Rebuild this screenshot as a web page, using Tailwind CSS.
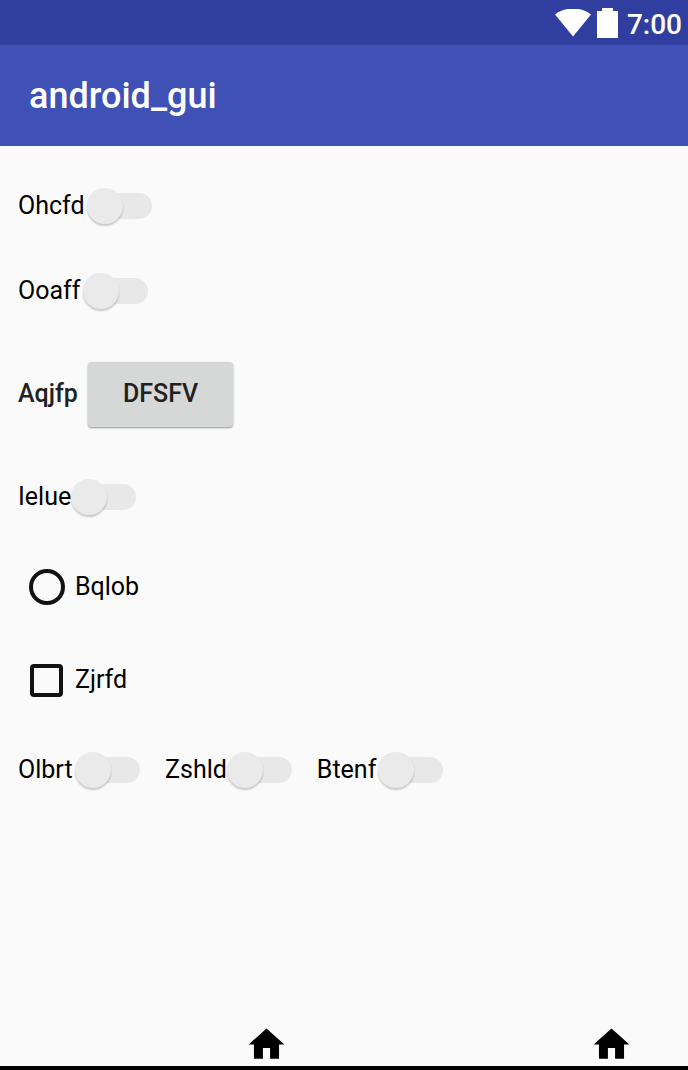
<!DOCTYPE html>
<html lang="en">
<head>
<meta charset="utf-8">
<meta name="viewport" content="width=device-width, initial-scale=1">
<title>android_gui</title>
<script src="https://cdn.jsdelivr.net/npm/@tailwindcss/browser@4"></script>
</head>
<body class="flex min-h-screen flex-col bg-[#fafafa] font-[Roboto,sans-serif] text-[25px] leading-8 text-black">
  <div class="flex h-[45px] items-center justify-end bg-[#303f9f] pr-[6px] text-white">
    <svg class="mr-[6px] h-7 w-9" viewBox="0 0 36 28" fill="currentColor" aria-hidden="true"><path d="M0 5.5C10-2.5 26-2.5 36 5.5L18 27.5Z"/></svg>
    <svg class="mr-[9px] h-[30px] w-[21px]" viewBox="0 0 21 30" fill="currentColor" aria-hidden="true"><path d="M5 0h11v3h5v27H0V3h5Z"/></svg>
    <span class="pt-1 text-[28px] font-medium leading-8">7:00</span>
  </div>
  <header class="flex h-[101px] items-center bg-[#3f51b5] px-[29px] text-white">
    <h1 class="text-[36px] font-medium leading-10">android_gui</h1>
  </header>
  <main class="flex grow flex-col px-[18px] pt-[18px]">
    <div class="flex h-[84px] items-center">
      <label for="s1" class="min-w-[69px]">Ohcfd</label>
      <input id="s1" type="checkbox" role="switch" class="relative h-9 w-[65px] shrink-0 appearance-none before:absolute before:inset-y-[5px] before:right-0 before:left-2 before:rounded-full before:bg-[#e8e8e8] after:absolute after:top-0 after:left-0 after:size-9 after:rounded-full after:bg-[#eaeaea] after:shadow-[0_2px_2px_rgba(0,0,0,0.2)] checked:after:left-[29px]">
    </div>
    <div class="flex h-[86px] items-center">
      <label for="s2" class="min-w-[65px]">Ooaff</label>
      <input id="s2" type="checkbox" role="switch" class="relative h-9 w-[65px] shrink-0 appearance-none before:absolute before:inset-y-[5px] before:right-0 before:left-2 before:rounded-full before:bg-[#e8e8e8] after:absolute after:top-0 after:left-0 after:size-9 after:rounded-full after:bg-[#eaeaea] after:shadow-[0_2px_2px_rgba(0,0,0,0.2)] checked:after:left-[29px]">
    </div>
    <div class="flex h-[120px] items-center font-medium text-[#212121]">
      <span class="min-w-[70px]">Aqjfp</span>
      <button type="button" class="h-[65px] w-[145px] rounded-[4px] bg-[#d6d7d7] shadow-[0_1px_2px_rgba(0,0,0,0.4)]">DFSFV</button>
    </div>
    <div class="flex h-[86px] items-center">
      <label for="s3" class="min-w-[53px]">Ielue</label>
      <input id="s3" type="checkbox" role="switch" class="relative h-9 w-[65px] shrink-0 appearance-none before:absolute before:inset-y-[5px] before:right-0 before:left-2 before:rounded-full before:bg-[#e8e8e8] after:absolute after:top-0 after:left-0 after:size-9 after:rounded-full after:bg-[#eaeaea] after:shadow-[0_2px_2px_rgba(0,0,0,0.2)] checked:after:left-[29px]">
    </div>
    <div class="flex h-[94px] items-center gap-[10px] pl-[11px]">
      <input id="r1" type="radio" class="size-9 shrink-0 appearance-none rounded-full border-4 border-[#111111] checked:bg-[#111111] checked:bg-clip-content checked:p-1">
      <label for="r1">Bqlob</label>
    </div>
    <div class="flex h-[92px] items-center gap-3 pl-3">
      <input id="c1" type="checkbox" class="size-[33px] shrink-0 appearance-none rounded-[4px] border-4 border-[#111111] checked:bg-[#111111]">
      <label for="c1">Zjrfd</label>
    </div>
    <div class="flex h-[88px] items-center gap-[25px]">
      <div class="flex items-center">
        <label for="s4" class="min-w-[57px]">Olbrt</label>
        <input id="s4" type="checkbox" role="switch" class="relative h-9 w-[65px] shrink-0 appearance-none before:absolute before:inset-y-[5px] before:right-0 before:left-2 before:rounded-full before:bg-[#e8e8e8] after:absolute after:top-0 after:left-0 after:size-9 after:rounded-full after:bg-[#eaeaea] after:shadow-[0_2px_2px_rgba(0,0,0,0.2)] checked:after:left-[29px]">
      </div>
      <div class="flex items-center">
        <label for="s5" class="min-w-[61px]">Zshld</label>
        <input id="s5" type="checkbox" role="switch" class="relative h-9 w-[65px] shrink-0 appearance-none before:absolute before:inset-y-[5px] before:right-0 before:left-2 before:rounded-full before:bg-[#e8e8e8] after:absolute after:top-0 after:left-0 after:size-9 after:rounded-full after:bg-[#eaeaea] after:shadow-[0_2px_2px_rgba(0,0,0,0.2)] checked:after:left-[29px]">
      </div>
      <div class="flex items-center">
        <label for="s6" class="min-w-[61px]">Btenf</label>
        <input id="s6" type="checkbox" role="switch" class="relative h-9 w-[65px] shrink-0 appearance-none before:absolute before:inset-y-[5px] before:right-0 before:left-2 before:rounded-full before:bg-[#e8e8e8] after:absolute after:top-0 after:left-0 after:size-9 after:rounded-full after:bg-[#eaeaea] after:shadow-[0_2px_2px_rgba(0,0,0,0.2)] checked:after:left-[29px]">
      </div>
    </div>
  </main>
  <nav class="flex justify-between border-b-4 border-black pr-[55px] pl-[245px]">
    <button type="button" aria-label="Home"><svg class="size-[43px]" viewBox="0 0 24 24" fill="currentColor" aria-hidden="true"><path d="M10 20v-6h4v6h5v-8h3L12 3 2 12h3v8z"/></svg></button>
    <button type="button" aria-label="Home"><svg class="size-[43px]" viewBox="0 0 24 24" fill="currentColor" aria-hidden="true"><path d="M10 20v-6h4v6h5v-8h3L12 3 2 12h3v8z"/></svg></button>
  </nav>
</body>
</html>
